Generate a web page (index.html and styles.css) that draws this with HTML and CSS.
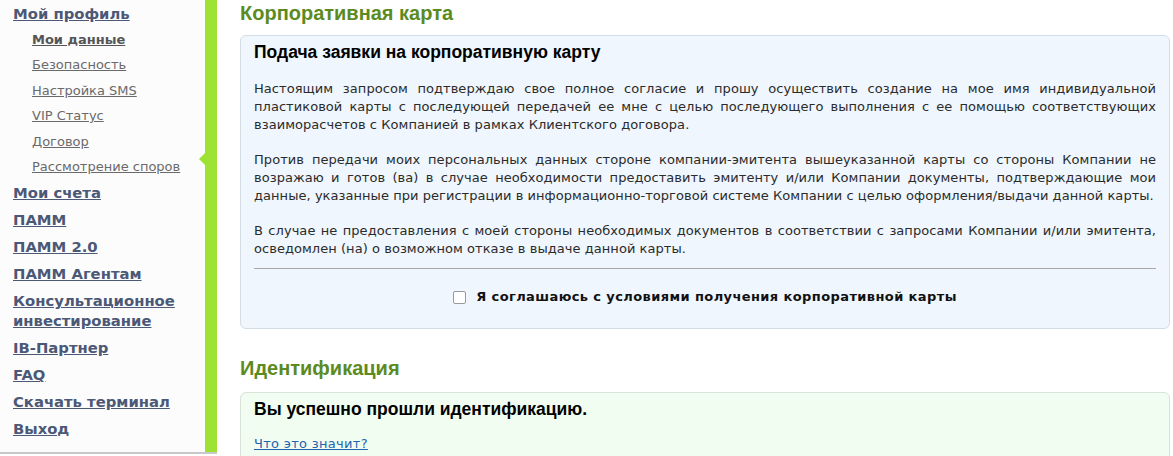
FILE: index.html
```html
<!DOCTYPE html>
<html lang="ru">
<head>
<meta charset="utf-8">
<title>Корпоративная карта</title>
<link rel="stylesheet" href="styles.css">
</head>
<body>
<div class="page">
  <div class="nav">
    <div class="sidebar">
      <ul class="menu">
        <li class="menu-item"><a href="#">Мой профиль</a>
          <ul class="submenu">
            <li class="sub-item active"><a href="#">Мои данные</a></li>
            <li class="sub-item"><a href="#">Безопасность</a></li>
            <li class="sub-item"><a href="#">Настройка SMS</a></li>
            <li class="sub-item"><a href="#">VIP Статус</a></li>
            <li class="sub-item"><a href="#">Договор</a></li>
            <li class="sub-item"><a href="#">Рассмотрение споров</a></li>
          </ul>
        </li>
        <li class="menu-item"><a href="#">Мои счета</a></li>
        <li class="menu-item"><a href="#">ПАММ</a></li>
        <li class="menu-item"><a href="#">ПАММ 2.0</a></li>
        <li class="menu-item"><a href="#">ПАММ Агентам</a></li>
        <li class="menu-item"><a href="#">Консультационное инвестирование</a></li>
        <li class="menu-item"><a href="#">IB-Партнер</a></li>
        <li class="menu-item"><a href="#">FAQ</a></li>
        <li class="menu-item"><a href="#">Скачать терминал</a></li>
        <li class="menu-item"><a href="#">Выход</a></li>
      </ul>
    </div>
    <div class="bar"><span class="pointer"></span></div>
  </div>
  <main class="content">
    <h2 class="section-title">Корпоративная карта</h2>
    <div class="card card-blue">
      <h3 class="card-title">Подача заявки на корпоративную карту</h3>
      <p class="text">Настоящим запросом подтверждаю свое полное согласие и прошу осуществить создание на мое имя индивидуальной пластиковой карты с последующей передачей ее мне с целью последующего выполнения с ее помощью соответствующих взаиморасчетов с Компанией в рамках Клиентского договора.</p>
      <p class="text">Против передачи моих персональных данных стороне компании-эмитента вышеуказанной карты со стороны Компании не возражаю и готов (ва) в случае необходимости предоставить эмитенту и/или Компании документы, подтверждающие мои данные, указанные при регистрации в информационно-торговой системе Компании с целью оформления/выдачи данной карты.</p>
      <p class="text">В случае не предоставления с моей стороны необходимых документов в соответствии с запросами Компании и/или эмитента, осведомлен (на) о возможном отказе в выдаче данной карты.</p>
      <hr class="divider">
      <label class="agree"><span class="checkbox"></span>Я соглашаюсь с условиями получения корпоративной карты</label>
    </div>
    <h2 class="section-title second">Идентификация</h2>
    <div class="card card-green">
      <h3 class="card-title">Вы успешно прошли идентификацию.</h3>
      <a class="help-link" href="#">Что это значит?</a>
    </div>
  </main>
</div>
</body>
</html>
```
FILE: styles.css
```css
html, body {
  margin: 0;
  padding: 0;
  background: #ffffff;
  overflow: hidden;
}
body {
  font-family: "DejaVu Sans", Verdana, sans-serif;
  font-size: 13px;
  color: #2b2b2b;
}
.page {
  display: flex;
  align-items: flex-start;
  height: 456px;
}
.nav {
  display: flex;
  height: 452px;
  border-bottom: 2px solid #c9c9c9;
  flex: none;
}
.sidebar {
  width: 205px;
  background: #fcfcfc;
  box-sizing: border-box;
  padding: 4px 0 0 13px;
}
.bar {
  width: 12px;
  background: #9de235;
  position: relative;
}
.pointer {
  position: absolute;
  left: -6px;
  top: 153px;
  width: 0;
  height: 0;
  border-top: 6px solid transparent;
  border-bottom: 6px solid transparent;
  border-right: 6px solid #9de235;
}
.menu, .submenu {
  list-style: none;
  margin: 0;
  padding: 0;
}
.menu-item {
  font-size: 14.8px;
  font-weight: bold;
  line-height: 20px;
  padding-bottom: 7px;
  width: 185px;
}
.menu-item > a {
  color: #4b5876;
  text-decoration: underline;
}
.submenu {
  margin: 3px 0 -3px 19px;
}
.sub-item {
  font-size: 13px;
  font-weight: normal;
  line-height: 25.4px;
}
.sub-item a {
  color: #6a6a6a;
  text-decoration: underline;
}
.sub-item.active a {
  font-weight: bold;
  color: #555555;
}
.content {
  flex: 1;
  padding: 1px 3px 0 23px;
  min-width: 0;
}
.section-title {
  margin: 0;
  font-family: "Liberation Sans", Arial, sans-serif;
  font-size: 20px;
  line-height: 24px;
  font-weight: bold;
  color: #5b8b1f;
}
.section-title.second {
  margin-top: 27px;
}
.card {
  border: 1px solid #d4dce4;
  border-radius: 6px;
  box-sizing: border-box;
  padding: 6px 13px 22px;
  margin-top: 10px;
}
.card-blue {
  background: #eff6fd;
}
.card-green {
  background: #f0fdf0;
  border-color: #d9e3d9;
  margin-top: 12px;
  padding-bottom: 20px;
}
.card-title {
  margin: 0;
  font-family: "Liberation Sans", Arial, sans-serif;
  font-size: 17.5px;
  line-height: 20px;
  font-weight: bold;
  color: #000000;
}
.text {
  margin: 17px 0 0;
  line-height: 18px;
  letter-spacing: 0.05px;
  text-align: justify;
}
.card-title + .text {
  margin-top: 18px;
}
.divider {
  border: 0;
  border-top: 1px solid #a9a9a9;
  margin: 10px 0 0;
  height: 0;
}
.agree {
  display: flex;
  justify-content: center;
  align-items: center;
  margin-top: 19px;
  line-height: 18px;
  font-weight: bold;
  letter-spacing: 0.4px;
  color: #111111;
}
.checkbox {
  width: 11px;
  height: 11px;
  border: 1px solid #9a9a9a;
  border-radius: 2px;
  background: #ffffff;
  margin-right: 10px;
  flex: none;
}
.help-link {
  display: inline-block;
  margin-top: 16px;
  line-height: 18px;
  letter-spacing: 0.3px;
  color: #1f64b0;
  text-decoration: underline;
}
```
